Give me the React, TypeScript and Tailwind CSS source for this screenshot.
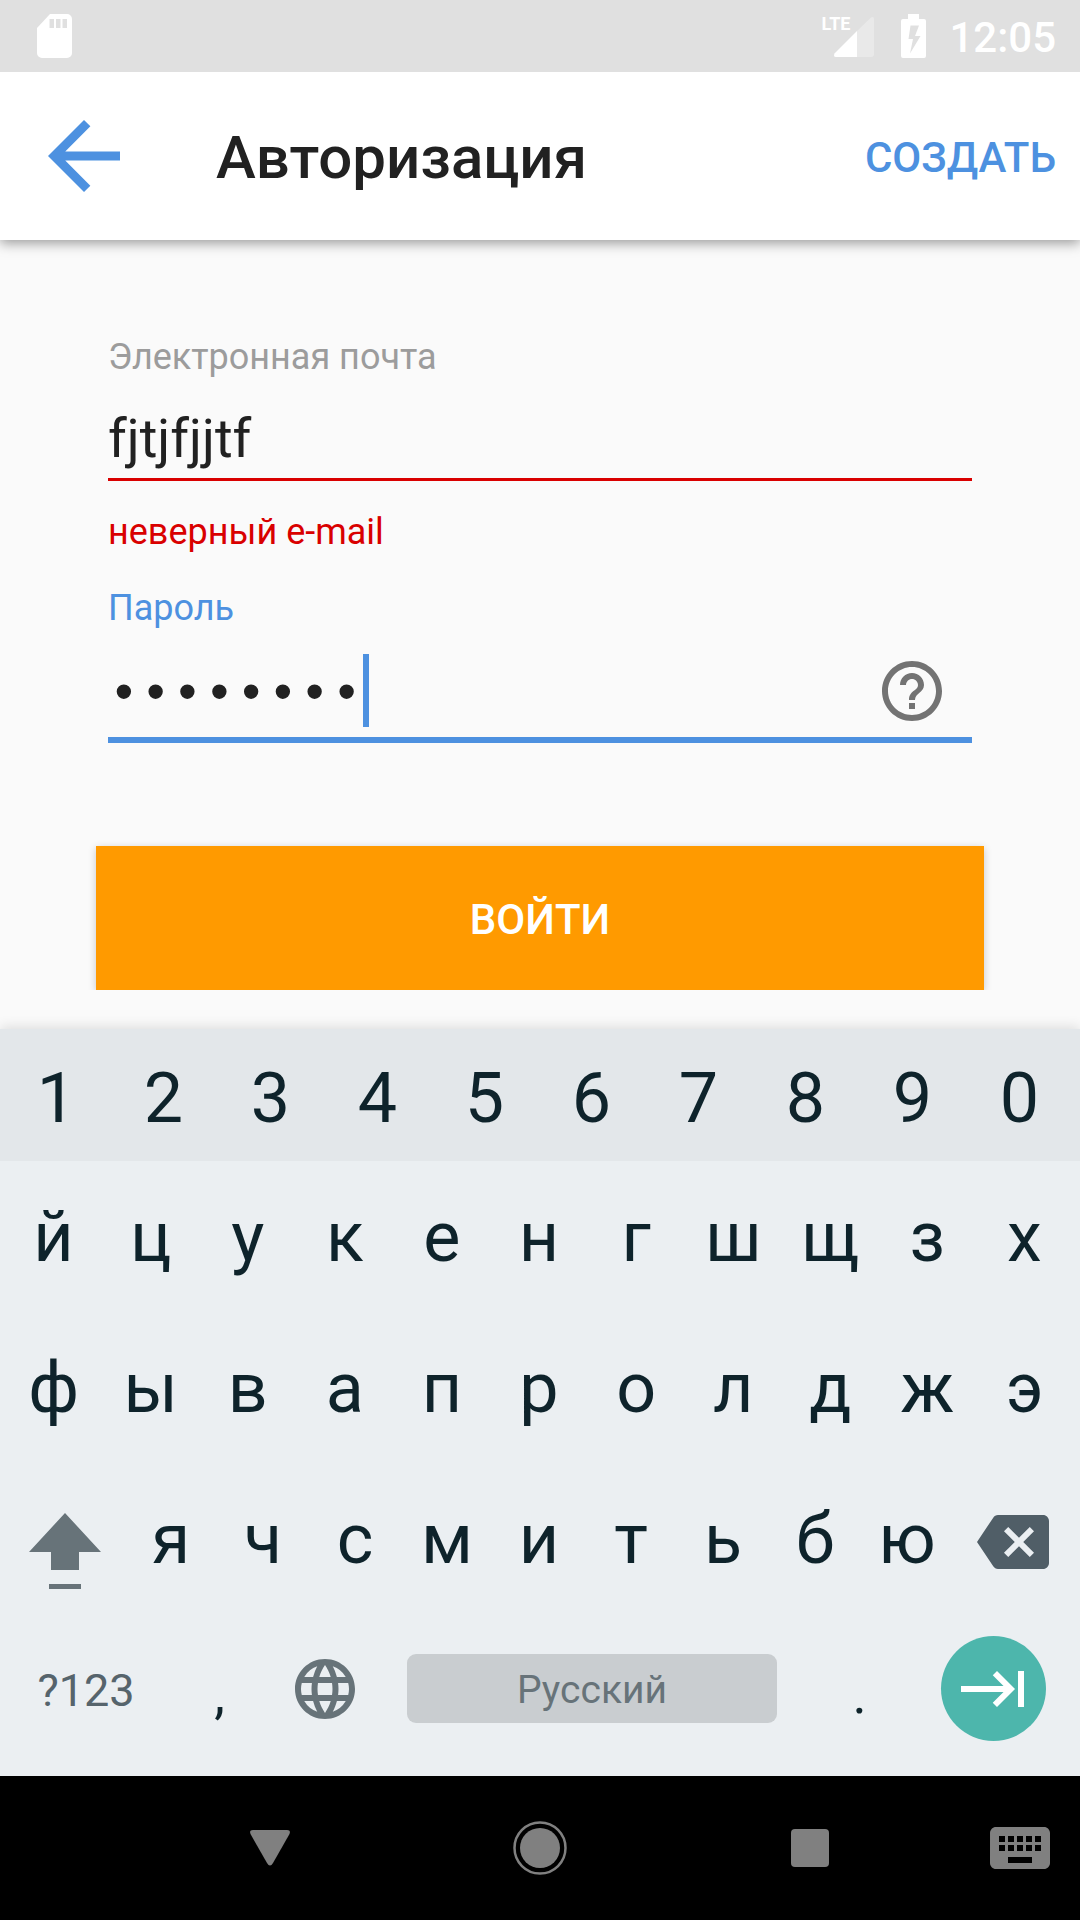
import React from "react";

const DIGITS = ["1", "2", "3", "4", "5", "6", "7", "8", "9", "0"];
const ROW_ONE = ["й", "ц", "у", "к", "е", "н", "г", "ш", "щ", "з", "х"];
const ROW_TWO = ["ф", "ы", "в", "а", "п", "р", "о", "л", "д", "ж", "э"];
const ROW_THREE = ["я", "ч", "с", "м", "и", "т", "ь", "б", "ю"];

function Key({ label }: { label: string }) {
  return (
    <button type="button" className="flex min-w-0 flex-1 basis-0 items-center justify-center">
      {label}
    </button>
  );
}

function StatusBar() {
  return (
    <div className="flex h-[72px] items-center bg-[#e0e0e0] pr-6 pl-9 text-white">
      <svg className="h-[44px] w-[36px]" viewBox="0 0 36 44" fill="currentColor" aria-hidden="true">
        <path
          fillRule="evenodd"
          d="M14 0h17a5 5 0 0 1 5 5v34a5 5 0 0 1-5 5H6a5 5 0 0 1-5-5V14zM13.500 5v9h4.500V5zM20 5v9h4.500V5zM26.500 5v9H31V5z"
        />
      </svg>
      <div className="ml-auto flex items-center">
        <div className="flex h-[44px] items-start">
          <span className="text-[18px] leading-5 font-bold">LTE</span>
          <svg className="-ml-[17px] h-[44px] w-[42px]" viewBox="0 0 42 44" fill="currentColor" aria-hidden="true">
            <path opacity="0.3" d="M38 3.500Q41 2 41 5v35q0 3-3 3H24V17z" />
            <path d="M24 17v26H3Q0 43 1.500 39.500z" />
          </svg>
        </div>
        <svg className="ml-[26px] h-[44px] w-[26px]" viewBox="0 0 26 44" fill="currentColor" aria-hidden="true">
          <path
            fillRule="evenodd"
            d="M7 0h11v5h5a2 2 0 0 1 2 2v35a2 2 0 0 1-2 2H2a2 2 0 0 1-2-2V7a2 2 0 0 1 2-2h5zM9.500 11.500L7.500 25H12L9 39.500 19.500 22H14l4-10.500z"
          />
        </svg>
        <span className="ml-[22px] pt-1 text-[42px] leading-[44px] font-medium">12:05</span>
      </div>
    </div>
  );
}

function AppBar() {
  return (
    <header className="z-10 flex h-[168px] items-center bg-white pr-6 pl-[30px] shadow-[0_3px_12px_rgba(0,0,0,0.4)] [clip-path:inset(0_0_-24px_0)]">
      <button type="button" aria-label="Назад" className="text-[#4d91e0]">
        <svg className="size-[108px]" viewBox="0 0 24 24" fill="currentColor" aria-hidden="true">
          <path d="M20 11H7.830l5.590-5.590L12 4l-8 8 8 8 1.410-1.410L7.830 13H20v-2z" />
        </svg>
      </button>
      <h1 className="ml-[78px] pt-1 text-[60px] leading-[72px] font-medium text-[#212121]">Авторизация</h1>
      <button type="button" className="ml-auto pt-1 text-[42px] leading-[48px] font-medium text-[#4d91e0]">
        СОЗДАТЬ
      </button>
    </header>
  );
}

function LoginForm() {
  return (
    <form className="flex flex-1 flex-col px-[108px] pt-24 pb-[39px]" onSubmit={(e) => e.preventDefault()}>
      <label htmlFor="email" className="text-[36px] leading-[42px] text-[#9c9c9c]">
        Электронная почта
      </label>
      <input
        id="email"
        type="text"
        defaultValue="fjtjfjjtf"
        aria-invalid="true"
        aria-describedby="email-error"
        className="h-[103px] w-full border-b-[3px] border-[#d90000] bg-transparent pt-5 text-[54px] text-[#212121] outline-none"
      />
      <p id="email-error" className="mt-[30px] text-[36px] leading-[42px] text-[#d90000]">
        неверный e-mail
      </p>
      <label htmlFor="password" className="mt-[34px] text-[36px] leading-[42px] text-[#4d91e0]">
        Пароль
      </label>
      <div className="relative flex h-[114px] items-center border-b-[6px] border-[#4d91e0] pt-4 pr-6">
        <input
          id="password"
          type="password"
          defaultValue="qwertyui"
          className="h-[80px] min-w-0 flex-1 bg-transparent pt-2.5 font-['Liberation_Mono',monospace] text-[53px] text-[#212121] outline-none"
        />
        <span className="absolute bottom-[10px] left-[255px] h-[73px] w-[6px] bg-[#4d91e0]" />
        <button type="button" aria-label="Забыли пароль?" className="text-[#737373]">
          <svg className="size-[72px]" viewBox="0 0 24 24" fill="currentColor" aria-hidden="true">
            <path d="M11 18h2v-2h-2v2zm1-16C6.480 2 2 6.480 2 12s4.480 10 10 10 10-4.480 10-10S17.520 2 12 2zm0 18c-4.410 0-8-3.590-8-8s3.590-8 8-8 8 3.590 8 8-3.590 8-8 8zm0-14c-2.210 0-4 1.790-4 4h2c0-1.100.9-2 2-2s2 .9 2 2c0 2-3 1.750-3 5h2c0-2.250 3-2.500 3-5 0-2.210-1.790-4-4-4z" />
          </svg>
        </button>
      </div>
      <button
        type="submit"
        className="-mx-3 mt-[103px] h-[144px] bg-[#ff9a00] pt-1 text-[42px] leading-[48px] font-medium text-white shadow-[0_2px_8px_rgba(0,0,0,0.2)] [clip-path:inset(-12px_-12px_0_-12px)]"
      >
        ВОЙТИ
      </button>
    </form>
  );
}

function Keyboard() {
  return (
    <section
      aria-label="Клавиатура"
      className="bg-[#ebeff2] pb-[13px] text-[70px] leading-[82px] text-[#0e232b] shadow-[0_-2px_12px_rgba(0,0,0,0.12)]"
    >
      <div className="flex h-[132px] bg-[#e3e7ea] pt-1.5 pr-[7px] pl-[3px]">
        {DIGITS.map((k) => (
          <Key key={k} label={k} />
        ))}
      </div>
      <div className="flex h-[151px] pr-[7px] pl-[5px]">
        {ROW_ONE.map((k) => (
          <Key key={k} label={k} />
        ))}
      </div>
      <div className="flex h-[151px] pr-[7px] pl-[5px]">
        {ROW_TWO.map((k) => (
          <Key key={k} label={k} />
        ))}
      </div>
      <div className="flex h-[151px] pr-[7px] pl-[5px]">
        <button type="button" aria-label="Shift" className="flex w-[120px] items-center justify-center pt-6 text-[#677379]">
          <svg className="h-[76px] w-[72px]" viewBox="0 0 72 76" fill="currentColor" aria-hidden="true">
            <path d="M36 0l36 39H50v18H22V39H0zM20 71h32v5H20z" />
          </svg>
        </button>
        {ROW_THREE.map((k) => (
          <Key key={k} label={k} />
        ))}
        <button type="button" aria-label="Удалить" className="flex w-[120px] items-center justify-center pt-1.5 text-[#505e67]">
          <svg className="size-[72px]" viewBox="0 0 24 24" fill="currentColor" aria-hidden="true">
            <path d="M22 3H7c-.69 0-1.230.35-1.590.88L0 12l5.410 8.110c.36.53.9.89 1.590.89h15c1.100 0 2-.9 2-2V5c0-1.100-.9-2-2-2zm-3 12.590L17.590 17 14 13.410 10.410 17 9 15.590 12.590 12 9 8.410 10.410 7 14 10.590 17.590 7 19 8.410 15.410 12 19 15.590z" />
          </svg>
        </button>
      </div>
      <div className="flex h-[149px] items-center px-[5px]">
        <button type="button" className="w-[162px] pt-1 text-[45px] leading-[54px] text-[#56646c]">
          ?123
        </button>
        <button type="button" className="w-[105px] pt-3 text-[54px] leading-[64px]">,</button>
        <button type="button" aria-label="Сменить язык" className="flex w-[105px] justify-center text-[#677379]">
          <svg className="size-[72px]" viewBox="0 0 24 24" fill="currentColor" aria-hidden="true">
            <path d="M11.990 2C6.470 2 2 6.480 2 12s4.470 10 9.990 10C17.520 22 22 17.520 22 12S17.520 2 11.990 2zm6.930 6h-2.950a15.650 15.650 0 0 0-1.380-3.560A8.030 8.030 0 0 1 18.920 8zM12 4.040c.83 1.200 1.480 2.530 1.910 3.960h-3.820c.43-1.430 1.080-2.760 1.910-3.960zM4.260 14C4.100 13.360 4 12.690 4 12s.1-1.360.26-2h3.380c-.08.66-.14 1.320-.14 2s.06 1.340.14 2H4.260zm.82 2h2.950c.32 1.250.78 2.450 1.380 3.560A7.987 7.987 0 0 1 5.080 16zm2.950-8H5.080a7.987 7.987 0 0 1 4.330-3.560A15.650 15.650 0 0 0 8.030 8zM12 19.960c-.83-1.200-1.480-2.530-1.910-3.960h3.820c-.43 1.430-1.080 2.760-1.910 3.960zM14.340 14H9.660c-.09-.66-.16-1.320-.16-2s.07-1.350.16-2h4.680c.09.65.16 1.320.16 2s-.07 1.340-.16 2zm.25 5.560c.6-1.110 1.060-2.310 1.380-3.560h2.950a8.030 8.030 0 0 1-4.330 3.560zM16.360 14c.08-.66.14-1.320.14-2s-.06-1.340-.14-2h3.380c.16.64.26 1.310.26 2s-.1 1.360-.26 2h-3.380z" />
          </svg>
        </button>
        <button
          type="button"
          className="mx-[30px] h-[69px] flex-1 rounded-[9px] bg-[#c9cdd0] pt-0.5 text-[39px] leading-[46px] text-[#677379]"
        >
          Русский
        </button>
        <button type="button" className="w-[105px] pt-3 text-[54px] leading-[64px]">.</button>
        <div className="flex w-[163px] justify-center">
          <button
            type="button"
            aria-label="Далее"
            className="flex size-[105px] items-center justify-center rounded-full bg-[#4db6ac] text-white"
          >
            <svg className="size-[72px]" viewBox="0 0 24 24" fill="currentColor" aria-hidden="true">
              <path d="M11.590 7.410L15.170 11H1v2h14.170l-3.590 3.590L13 18l6-6-6-6-1.410 1.410zM20 6v12h2V6h-2z" />
            </svg>
          </button>
        </div>
      </div>
    </section>
  );
}

function NavigationBar() {
  return (
    <nav className="grid h-[144px] grid-cols-[1fr_2fr_2fr_2fr_1fr] items-center bg-black text-[#808080]">
      <button type="button" aria-label="Скрыть клавиатуру" className="col-start-2 justify-self-center">
        <svg className="h-[36px] w-[40px]" viewBox="0 0 40 36" fill="currentColor" aria-hidden="true">
          <path d="M3 0h34q4 0 2.500 4L23 33q-3 5-6 0L.5 4Q-1 0 3 0z" />
        </svg>
      </button>
      <button type="button" aria-label="Домой" className="justify-self-center">
        <svg className="size-[54px]" viewBox="0 0 54 54" aria-hidden="true">
          <circle cx="27" cy="27" r="25.500" fill="none" stroke="currentColor" strokeWidth="2.500" />
          <circle cx="27" cy="27" r="20" fill="currentColor" />
        </svg>
      </button>
      <button type="button" aria-label="Недавние" className="size-[38px] justify-self-center rounded-[4px] bg-[#808080]" />
      <button type="button" aria-label="Выбор клавиатуры" className="mr-6 justify-self-end">
        <svg className="size-[72px]" viewBox="0 0 24 24" fill="currentColor" aria-hidden="true">
          <path d="M20 5H4c-1.100 0-1.990.9-1.990 2L2 17c0 1.100.9 2 2 2h16c1.100 0 2-.9 2-2V7c0-1.100-.9-2-2-2zm-9 3h2v2h-2V8zm0 3h2v2h-2v-2zM8 8h2v2H8V8zm0 3h2v2H8v-2zm-1 2H5v-2h2v2zm0-3H5V8h2v2zm9 7H8v-2h8v2zm0-4h-2v-2h2v2zm0-3h-2V8h2v2zm3 3h-2v-2h2v2zm0-3h-2V8h2v2z" />
        </svg>
      </button>
    </nav>
  );
}

export default function App() {
  return (
    <div className="flex min-h-screen flex-col bg-[#fafafa] font-[Roboto,sans-serif]">
      <StatusBar />
      <AppBar />
      <LoginForm />
      <Keyboard />
      <NavigationBar />
    </div>
  );
}
